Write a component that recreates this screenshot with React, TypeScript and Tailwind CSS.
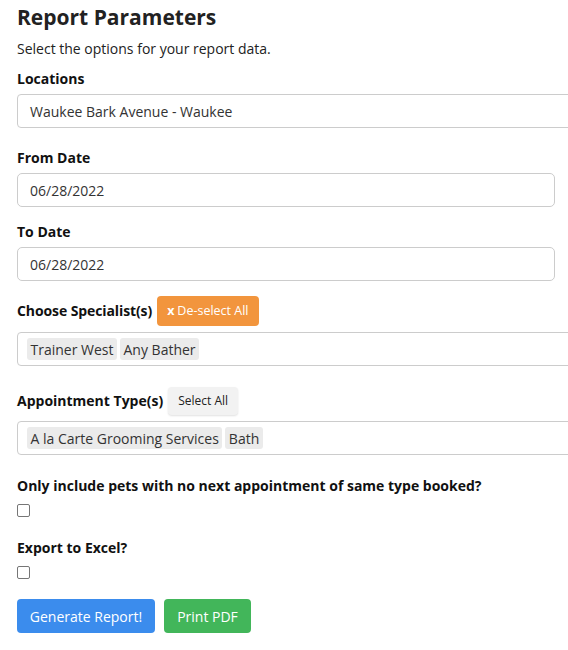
import React from "react";

const Tag = ({ children }: { children: React.ReactNode }) => (
  <span className="inline-flex h-[22px] items-center rounded-[3px] bg-[#ebebeb] px-[3.5px] text-[14px] text-[#333]">
    {children}
  </span>
);

export default function App() {
  return (
    <div
      className="min-h-[650px] w-[568px] overflow-hidden bg-white pl-[17px] text-[#111]"
      style={{ fontFamily: '"Open Sans", "Liberation Sans", sans-serif' }}
    >
      <h2 className="flex h-[36px] items-center text-[21px] font-bold text-[#222]">Report Parameters</h2>
      <p className="mt-[2px] flex h-[20px] items-center text-[14px] text-[#222]">
        Select the options for your report data.
      </p>

      <label className="mt-[11px] flex h-[20px] items-center pb-[2px] text-[14px] font-bold">Locations</label>
      <div className="mt-[5px] flex h-[34px] w-[600px] items-center rounded-l-[4px] border border-[#ccc] pl-[12px] text-[14px] text-[#333]">
        Waukee Bark Avenue - Waukee
      </div>

      <label className="mt-[20px] flex h-[20px] items-center pb-[2px] text-[14px] font-bold">From Date</label>
      <div className="mt-[5px] flex h-[34px] w-[538px] items-center rounded-[5px] border border-[#ccc] pl-[12px] text-[14px] text-[#333]">
        06/28/2022
      </div>

      <label className="mt-[15px] flex h-[20px] items-center pb-[2px] text-[14px] font-bold">To Date</label>
      <div className="mt-[5px] flex h-[34px] w-[538px] items-center rounded-[5px] border border-[#ccc] pl-[12px] text-[14px] text-[#333]">
        06/28/2022
      </div>

      <div className="mt-[15px] flex h-[30px] items-center gap-[5px]">
        <span className="pb-[1px] text-[14px] font-bold tracking-[-0.1px]">Choose Specialist(s)</span>
        <button className="flex h-[30px] items-center gap-[3px] rounded-[4px] bg-[#f2953d] px-[10px] text-[12.5px] text-white">
          <span className="font-bold">x</span>
          <span>De-select All</span>
        </button>
      </div>
      <div className="mt-[6px] flex h-[34px] w-[600px] items-center gap-[3px] rounded-l-[4px] border border-[#ccc] pl-[9px]">
        <Tag>Trainer West</Tag>
        <Tag>Any Bather</Tag>
      </div>

      <div className="mt-[21px] flex h-[28px] items-center gap-[5px]">
        <span className="pb-[1px] text-[14px] font-bold">Appointment Type(s)</span>
        <button className="flex h-[28px] items-center rounded-[4px] bg-[#f2f2f2] px-[10px] text-[12px] text-[#222] shadow-[0_1px_2px_rgba(0,0,0,0.12)]">
          Select All
        </button>
      </div>
      <div className="mt-[6px] flex h-[34px] w-[600px] items-center gap-[3px] rounded-l-[4px] border border-[#ccc] pl-[9px]">
        <Tag>A la Carte Grooming Services</Tag>
        <Tag>Bath</Tag>
      </div>

      <label className="mt-[21px] flex h-[20px] items-center pb-[2px] text-[14px] font-bold">
        Only include pets with no next appointment of same type booked?
      </label>
      <div className="mt-[8px] h-[13px] w-[13px] rounded-[2px] border border-[#767676]" />

      <label className="mt-[21px] flex h-[20px] items-center pb-[2px] text-[14px] font-bold">Export to Excel?</label>
      <div className="mt-[8px] h-[13px] w-[13px] rounded-[2px] border border-[#767676]" />

      <div className="mt-[20px] flex gap-[9px]">
        <button className="flex h-[34px] w-[138px] items-center justify-center rounded-[4px] bg-[#3b8ced] text-[14px] text-white">
          Generate Report!
        </button>
        <button className="flex h-[34px] w-[87px] items-center justify-center rounded-[4px] bg-[#42b65a] text-[14px] text-white">
          Print PDF
        </button>
      </div>
    </div>
  );
}
